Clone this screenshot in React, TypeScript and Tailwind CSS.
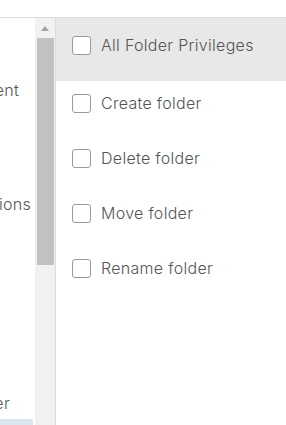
import React from 'react';

const privileges = ['All Folder Privileges', 'Create folder', 'Delete folder', 'Move folder', 'Rename folder'];

// left tree labels are scrolled horizontally, only their ends show
const leftRows = [
  { label: 'Datastore management', end: 19, top: 62 },
  { label: 'Virtual machine operations', end: 31, top: 94 },
  { label: 'Folder', end: 10, top: 179 },
];

const Checkbox: React.FC = () => (
  <span className="block w-[19px] h-[19px] rounded-[3px] border border-[#9a9a9a] bg-white shrink-0" />
);

export default function App() {
  return (
    <div
      className="w-[286px] h-[425px] bg-white overflow-hidden flex flex-col text-[#555555] font-light"
      style={{ fontFamily: 'Inter, "Open Sans", sans-serif' }}
    >
      <div className="h-[18px] border-b border-[#dcdcdc] shrink-0" />
      <div className="flex flex-1 min-h-0">
        {/* left tree, clipped */}
        <div className="w-[35px] shrink-0 overflow-hidden flex flex-col">
          {leftRows.map((r) => (
            <div
              key={r.label}
              className="flex justify-end whitespace-nowrap text-[16px] leading-[20px] tracking-[0.3px]"
              style={{ width: r.end, marginTop: r.top }}
            >
              {r.label}
            </div>
          ))}
          <div className="mt-auto w-[33px] h-[6px] bg-[#dce6ef]" />
        </div>

        {/* scrollbar */}
        <div className="w-[21px] shrink-0 bg-[#f1f1f1] flex flex-col items-center border-r border-[#dcdcdc]">
          <div className="h-[20px] flex items-center justify-center">
            <span className="block w-0 h-0 border-l-[4px] border-r-[4px] border-b-[5px] border-l-transparent border-r-transparent border-b-[#a3a3a3]" />
          </div>
          <div className="w-[17px] h-[227px] bg-[#c1c1c1]" />
        </div>

        {/* privileges list */}
        <div className="flex-1 flex flex-col">
          {privileges.map((p, i) => (
            <div
              key={p}
              className={
                i === 0
                  ? 'h-[63px] pt-[18px] pl-[16px] flex items-start gap-[10px] bg-[#e8e8e8]'
                  : 'h-[55px] pt-[13px] pl-[16px] flex items-start gap-[10px]'
              }
            >
              <Checkbox />
              <span className="text-[16px] leading-[18px] tracking-[0.3px]">{p}</span>
            </div>
          ))}
        </div>
      </div>
    </div>
  );
}
